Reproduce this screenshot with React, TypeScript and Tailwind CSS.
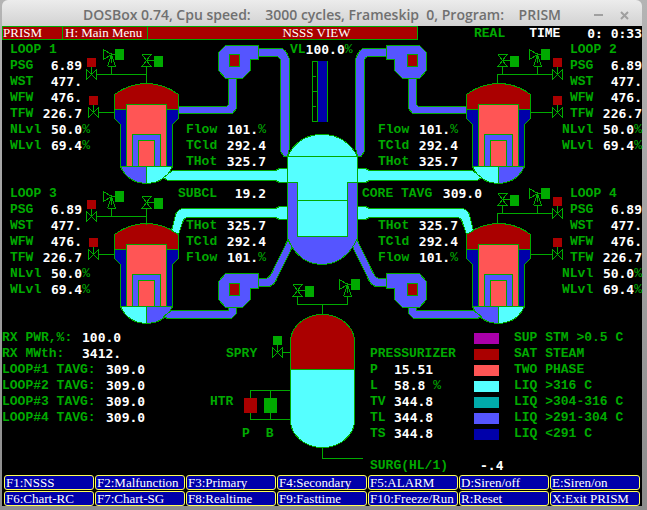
import React from "react";

type Row = { label: string; value: string; unit?: string };

const GREEN = "#00aa00";
const RED = "#aa0000";
const PINK = "#ff5555";
const CYAN = "#55ffff";
const BLUE = "#5555ff";
const NAVY = "#0000aa";

const loopRows: Row[] = [
  { label: "PSG", value: "6.89" },
  { label: "WST", value: "477." },
  { label: "WFW", value: "476." },
  { label: "TFW", value: "226.7" },
];
const levelRows: Row[] = [
  { label: "NLvl", value: "50.0", unit: "%" },
  { label: "WLvl", value: "69.4", unit: "%" },
];
const flowRows: Row[] = [
  { label: "Flow", value: "101.", unit: "%" },
  { label: "TCld", value: "292.4" },
  { label: "THot", value: "325.7" },
];
const reactorRows = [
  { label: "RX PWR,%:", value: "100.0", wide: false },
  { label: "RX MWth:", value: "3412.", wide: false },
  { label: "LOOP#1 TAVG:", value: "309.0", wide: true },
  { label: "LOOP#2 TAVG:", value: "309.0", wide: true },
  { label: "LOOP#3 TAVG:", value: "309.0", wide: true },
  { label: "LOOP#4 TAVG:", value: "309.0", wide: true },
];
const pressurizerRows: Row[] = [
  { label: "P", value: "15.51" },
  { label: "L", value: "58.8", unit: "%" },
  { label: "TV", value: "344.8" },
  { label: "TL", value: "344.8" },
  { label: "TS", value: "344.8" },
];
const legend = [
  { swatch: "bg-[#aa00aa]", text: "SUP STM >0.5 C" },
  { swatch: "bg-[#aa0000]", text: "SAT STEAM" },
  { swatch: "bg-[#ff5555]", text: "TWO PHASE" },
  { swatch: "bg-[#55ffff]", text: "LIQ >316 C" },
  { swatch: "bg-[#00aaaa]", text: "LIQ >304-316 C" },
  { swatch: "bg-[#5555ff]", text: "LIQ >291-304 C" },
  { swatch: "bg-[#0000aa]", text: "LIQ <291 C" },
];
const keys = [
  "F1:NSSS", "F2:Malfunction", "F3:Primary", "F4:Secondary", "F5:ALARM", "D:Siren/off", "E:Siren/on",
  "F6:Chart-RC", "F7:Chart-SG", "F8:Realtime", "F9:Fasttime", "F10:Freeze/Run", "R:Reset", "X:Exit PRISM",
];

/* ---------- plant drawing ---------- */

function SteamGenerator({ x, y, left, right }: { x: number; y: number; left: string; right: string }) {
  return (
    <g transform={`translate(${x} ${y})`}>
      <path d="M114.5 109.5V94.5Q129 83.5 146.5 83.5T178.5 94.5V109.5Z" fill={RED} />
      <path d="M114.5 109.5H178.5V118.5L172.5 124.5V166.5H120.5V124.5L114.5 118.5Z" fill={NAVY} />
      <path d="M126.5 166.5V104.5H166.5V166.5Z" fill={PINK} />
      <path d="M132.5 166.5V134.5H160.5V166.5Z" fill={BLUE} />
      <path d="M138.5 166.5V140.5H154.5V166.5Z" fill={PINK} />
      <path d="M120.5 166.5Q128 183 146.5 183.5V166.5Z" fill={left} />
      <path d="M172.5 166.5Q165 183 146.5 183.5V166.5Z" fill={right} />
    </g>
  );
}

function StopValve({ x, y }: { x: number; y: number }) {
  return (
    <g transform={`translate(${x} ${y})`}>
      <path d="M-4.5 -12H4.5L-4.5 0H4.5L-4.5 -12M0 -6H8" fill="none" />
      <rect x="8" y="-10" width="8" height="10" fill={GREEN} />
    </g>
  );
}

function ReliefValve({ x, y }: { x: number; y: number }) {
  return (
    <g transform={`translate(${x} ${y})`}>
      <path d="M-4 0H4L0 -12L-4 0M-8 -17V-7L0 -12ZM0 -12V-4M0 -12H4" fill="none" />
      <rect x="4" y="-17" width="8" height="10" fill={GREEN} />
    </g>
  );
}

function ControlValve({ x, y, color }: { x: number; y: number; color: string }) {
  return (
    <g transform={`translate(${x} ${y})`}>
      <path d="M-5 -5V5L5 -5V5ZM0 0V-8" fill="none" />
      <rect x="-4.5" y="-16.5" width="9" height="9" fill={color} stroke="none" />
    </g>
  );
}

function UpperLegs() {
  return (
    <g fill={BLUE}>
      <path d="M258.5 48.5H281Q286 48.5 289.5 59.5V148L287.5 156.5H284L280.5 151.5V60.5Q279.5 56.5 276 56.5H258.5Z" />
      <path d="M178.5 106.5H226.5L228.5 104.5V78.5H236.5V108.5L232.5 113.5H178.5Z" />
      <path d="M225.5 45.5H258.5V59.5H250.5V70.5L242.5 78.5H225.5L218.5 70.5V52.5Z" />
    </g>
  );
}

function LowerLegs() {
  return (
    <g fill={BLUE}>
      <path d="M258.5 278.5H266.5Q270 277 272.5 271.5L288.5 238.5L292.5 246.5L275.5 281.5Q272 286.5 268.5 286.5H258.5Z" />
      <path d="M171.5 310.5H228.5V307.5H236.5V313.5L231.5 318.5H167.5L163.5 316.5Z" />
      <path d="M225.5 273.5H258.5V288.5H250.5V299.5L242.5 307.5H225.5L218.5 299.5V281.5Z" />
    </g>
  );
}

function HotLegs() {
  return (
    <g fill={CYAN}>
      <path d="M172.5 170.5H275.5L279.5 168.5H287.5V182.5H279.5L275.5 180.5H167.5L163.5 177.5Z" />
      <path d="M171.5 230.5L176 213.5Q178.5 208.5 183.5 208.5H275.5L279.5 206.5H287.5V219.5H279.5L275.5 217.5H188.5Q184.5 217.5 183 221.5L178.5 234.5Z" />
    </g>
  );
}

function PlantDrawing() {
  return (
    <svg
      viewBox="2 42 640 432"
      className="absolute inset-0 h-full w-full"
      stroke={GREEN}
      strokeWidth="1"
      shapeRendering="crispEdges"
      aria-hidden="true"
    >
      <SteamGenerator x={0} y={0} left={BLUE} right={CYAN} />
      <SteamGenerator x={352} y={0} left={CYAN} right={BLUE} />
      <SteamGenerator x={0} y={140} left={CYAN} right={BLUE} />
      <SteamGenerator x={352} y={140} left={BLUE} right={CYAN} />

      <HotLegs />
      <UpperLegs />
      <LowerLegs />
      <g transform="translate(645 0) scale(-1 1)">
        <HotLegs />
        <UpperLegs />
        <LowerLegs />
      </g>
      <g fill={RED}>
        <path d="M229.5 54.5h10v12h-10Z" />
        <path d="M407.5 54.5h10v12h-10Z" />
        <path d="M229.5 283.5h10v12h-10Z" />
        <path d="M407.5 283.5h10v12h-10Z" />
      </g>

      {/* reactor vessel */}
      <path d="M287.5 156.5Q298 134.5 322 134.5T357.5 156.5V240H287.5Z" fill={CYAN} />
      <path d="M287.5 182.5H297.5V236.5H347.5V182.5H357.5V238.5Q345 264.5 322 264.5T287.5 238.5Z" fill={BLUE} />
      <path d="M287.5 156.5H357.5M297.5 200.5H347.5" />

      {/* vessel level gauge */}
      <path d="M312.5 61.5H317.5V121.5H312.5ZM312.5 76.5H316M312.5 91.5H317M312.5 106.5H316" fill="none" />
      <path d="M318 61H327V122H318Z" fill={NAVY} stroke="none" />
      <path d="M317.5 61V122M327.5 61V122" />

      {/* steam and feed lines */}
      {[0, 142].map((dy) => (
        <g key={dy} transform={`translate(0 ${dy})`}>
          <path d="M96.5 74.5H146.5M111.5 66.5V74.5M146.5 66.5V82.5M98.5 112.5H114.5" fill="none" />
          <ControlValve x={91.5} y={74.5} color={RED} />
          <ControlValve x={93.5} y={112.5} color={RED} />
          <ReliefValve x={111.5} y={66.5} />
          <StopValve x={146.5} y={66.5} />
        </g>
      ))}
      {[0, 139].map((dy) => (
        <g key={dy} transform={`translate(0 ${dy})`}>
          <path d="M552.5 74.5H497.5V84M502.5 66.5V74.5M537.5 66.5V74.5" fill="none" />
          <StopValve x={502.5} y={66.5} />
          <ReliefValve x={537.5} y={66.5} />
          <ControlValve x={557.5} y={74.5} color={RED} />
        </g>
      ))}
      <path d="M530.5 112.5H552.5M530.5 254.5H552.5" />
      <ControlValve x={557.5} y={112.5} color={RED} />
      <ControlValve x={557.5} y={254.5} color={RED} />

      {/* pressurizer */}
      <path d="M290.5 369.5V341.5A32 27 0 0 1 354.5 341.5V369.5Z" fill={RED} />
      <path d="M290.5 369.5V420.5A32 27 0 0 0 354.5 420.5V369.5Z" fill={CYAN} />
      <path d="M297.5 296.5V304.5H347.5V296.5M322.5 304.5V314.5M322.5 447.5V458.5H363" fill="none" />
      <StopValve x={297.5} y={296.5} />
      <ReliefValve x={347.5} y={296.5} />
      <ControlValve x={277.5} y={352.5} color={GREEN} />
      <path d="M282.5 352.5H290.5M290.5 390.5H250.5V419.5H290.5M270.5 390.5V419.5" fill="none" />
      <path d="M244 398h13v15h-13Z" fill={RED} stroke="none" />
      <path d="M264 398h13v15h-13Z" fill={GREEN} stroke="none" />
    </svg>
  );
}

/* ---------- readouts ---------- */

function Value({ children }: { children: React.ReactNode }) {
  return <span className="font-['DejaVu_Sans_Mono',monospace] text-white">{children}</span>;
}

function Reading({ row, className }: { row: Row; className: string }) {
  return (
    <div className={`flex h-4 justify-between ${className}`}>
      <span>{row.label}</span>
      <span className="flex">
        <Value>{row.value}</Value>
        {row.unit && <span className="font-normal">{row.unit}</span>}
      </span>
    </div>
  );
}

function LoopPanel({ name, rightSide = false }: { name: string; rightSide?: boolean }) {
  return (
    <section className={rightSide ? "flex flex-col items-end" : "pl-2"}>
      <h2 className="w-18">{name}</h2>
      {loopRows.map((r) => (
        <Reading key={r.label} row={r} className="w-18" />
      ))}
      {levelRows.map((r) => (
        <Reading key={r.label} row={r} className="w-20" />
      ))}
    </section>
  );
}

function FlowPanel({ rows }: { rows: Row[] }) {
  return (
    <div>
      {rows.map((r) => (
        <Reading key={r.label} row={r} className="w-20" />
      ))}
    </div>
  );
}

export default function App() {
  const reversed = [...flowRows].reverse();
  return (
    <div className="min-h-screen bg-linear-to-b from-[#b4b4b4] to-[#8c8c8c] pr-[5px] pb-1 pl-[2px]">
      <header className="relative flex h-[26px] items-center justify-center rounded-t-md bg-linear-to-b from-[#ececec] to-[#d2d2d2] pt-1 font-['Open_Sans','Noto_Sans',sans-serif] text-[14px] leading-5 font-semibold text-[#707070]">
        <h1 className="whitespace-pre">DOSBox 0.74, Cpu speed:    3000 cycles, Frameskip  0, Program:    PRISM</h1>
        <div className="absolute right-2.5 flex gap-3.5">
          <button type="button" aria-label="Minimize" className="flex h-4 w-3 items-center">
            <span className="h-[2px] w-[9px] bg-[#a0a0a0]" />
          </button>
          <button type="button" aria-label="Close" className="flex h-4 w-3 items-center">
            <svg viewBox="0 0 9 9" className="h-[9px] w-[9px]" stroke="#a0a0a0" strokeWidth="2">
              <path d="M1 1L8 8M8 1L1 8" />
            </svg>
          </button>
        </div>
      </header>

      <main className="bg-black font-['Liberation_Mono',monospace] text-[13px] leading-4 font-bold text-[#00aa00]">
        <div className="flex h-4 items-start">
          <nav className="flex h-[14px] w-[65%] items-stretch border border-[#00aa00] bg-[#aa0000] font-['Liberation_Serif',serif] text-[13px] leading-3 font-normal text-white">
            <button type="button" className="w-15 border-r border-[#00aa00] text-left">PRISM</button>
            <button type="button" className="w-[85px] border-r border-[#00aa00] pl-[2px] text-left">H: Main Menu</button>
            <h2 className="flex-1 pl-17 text-center">NSSS VIEW</h2>
          </nav>
          <div className="flex flex-1 gap-6 pl-14">
            <span>REAL</span>
            <span className="text-white">TIME</span>
            <span className="ml-auto font-['DejaVu_Sans_Mono',monospace] whitespace-pre text-white">0: 0:33</span>
          </div>
        </div>

        <div className="relative">
          <PlantDrawing />
          <div className="relative">
            <div className="grid h-36 grid-cols-[184fr_376fr_80fr]">
              <LoopPanel name="LOOP 1" />
              <div className="flex flex-col gap-16">
                <p className="flex h-4 pl-[104px]">
                  <span>VL</span>
                  <Value>100.0</Value>
                  <span className="font-normal">%</span>
                </p>
                <div className="grid grid-cols-[192fr_184fr]">
                  <FlowPanel rows={flowRows} />
                  <FlowPanel rows={flowRows} />
                </div>
              </div>
              <LoopPanel name="LOOP 2" rightSide />
            </div>

            <div className="grid h-36 grid-cols-[176fr_384fr_80fr]">
              <LoopPanel name="LOOP 3" />
              <div className="flex flex-col gap-4">
                <div className="grid grid-cols-[184fr_200fr]">
                  <Reading row={{ label: "SUBCL", value: "19.2" }} className="w-22" />
                  <Reading row={{ label: "CORE TAVG", value: "309.0" }} className="w-30" />
                </div>
                <div className="grid grid-cols-[192fr_184fr] pl-2">
                  <FlowPanel rows={reversed} />
                  <FlowPanel rows={reversed} />
                </div>
              </div>
              <LoopPanel name="LOOP 4" rightSide />
            </div>

            <div className="grid h-36 grid-cols-[208fr_160fr_272fr]">
              <section>
                {reactorRows.map((r) => (
                  <div key={r.label} className="flex h-4">
                    <span className={r.wide ? "w-26" : "w-20"}>{r.label}</span>
                    <Value>{r.value}</Value>
                  </div>
                ))}
              </section>
              <div className="flex flex-col pt-4">
                <span className="pl-4">SPRY</span>
                <span className="pt-8">HTR</span>
                <span className="flex gap-4 pt-4 pl-8">
                  <span>P</span>
                  <span>B</span>
                </span>
              </div>
              <div className="flex flex-col gap-4">
                <div className="grid grid-cols-[104fr_168fr]">
                  <section className="pt-4">
                    <h2>PRESSURIZER</h2>
                    {pressurizerRows.map((r) => (
                      <div key={r.label} className="flex h-4">
                        <span className="w-6">{r.label}</span>
                        <Value>{r.value}</Value>
                        {r.unit && <span className="pl-2 font-normal">{r.unit}</span>}
                      </div>
                    ))}
                  </section>
                  <ul>
                    {legend.map((l) => (
                      <li key={l.text} className="flex items-center gap-[15px]">
                        <span className={`h-[11px] w-[25px] ${l.swatch}`} />
                        <span>{l.text}</span>
                      </li>
                    ))}
                  </ul>
                </div>
                <p className="flex h-4 gap-8">
                  <span>SURG(HL/1)</span>
                  <Value>-.4</Value>
                </p>
              </div>
            </div>
          </div>
        </div>

        <div className="grid grid-cols-7 gap-px px-[2px] pt-px font-['Liberation_Serif',serif] text-[13px] font-normal">
          {keys.map((k) => (
            <button
              key={k}
              type="button"
              className="h-[15px] overflow-hidden rounded-[3px] border border-[#ffff55] bg-[#0000aa] pl-px text-left leading-3 whitespace-nowrap text-white"
            >
              {k}
            </button>
          ))}
        </div>
      </main>
    </div>
  );
}
